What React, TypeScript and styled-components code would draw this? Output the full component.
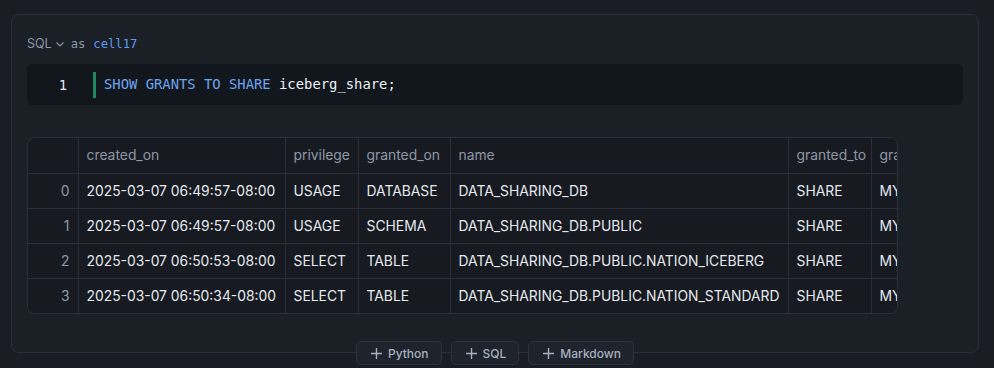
import React from "react";
import styled, { createGlobalStyle } from "styled-components";

const Global = createGlobalStyle`
  html, body { margin: 0; padding: 0; background: #1a1d23; }
  body { font-family: Inter, "Noto Sans", sans-serif; }
  * { box-sizing: border-box; }
`;

const Page = styled.div`
  width: 994px;
  height: 368px;
  padding: 14px 15px 0 11px;
  overflow: hidden;
`;

const Cell = styled.div`
  position: relative;
  height: 339px;
  border: 1px solid #2a2f3d;
  border-radius: 8px;
  background: #1b1f26;
  padding: 20px 15px 0 15px;
`;

const Header = styled.div`
  display: flex;
  align-items: center;
  gap: 6px;
  height: 17px;
  font-size: 12px;
`;

const Lang = styled.span`
  display: flex;
  align-items: center;
  gap: 3px;
  color: #8d96a6;
  font-family: Inter, sans-serif;
  font-size: 12.5px;
`;

const Mono = styled.span<{ $blue?: boolean }>`
  font-family: "DejaVu Sans Mono", "Liberation Mono", monospace;
  font-size: 12.2px;
  color: ${(p) => (p.$blue ? "#5b9bf0" : "#8d96a6")};
  margin-left: ${(p) => (p.$blue ? "2px" : "0")};
`;

const Editor = styled.div`
  margin-top: 12px;
  height: 41px;
  border-radius: 5px;
  background: #12171e;
  display: flex;
  align-items: center;
`;

const LineNo = styled.div`
  width: 66px;
  padding-right: 26px;
  text-align: right;
  font-family: "DejaVu Sans Mono", monospace;
  font-size: 13.85px;
  color: #e6e9ee;
`;

const Gutter = styled.div`
  width: 3px;
  height: 26px;
  background: #1f8a5e;
  margin-right: 8px;
`;

const Code = styled.div`
  font-family: "DejaVu Sans Mono", "Liberation Mono", monospace;
  font-size: 13.85px;
  color: #eef1f5;
  white-space: pre;
  margin-top: -1px;
`;

const Kw = styled.span`
  color: #6fa4ee;
`;

const TableWrap = styled.div`
  margin-top: 32px;
  width: 871px;
  border: 1px solid #2a2f3a;
  border-radius: 8px;
  overflow: hidden;
`;

const Table = styled.table`
  border-collapse: collapse;
  table-layout: fixed;
  width: 963px;
  font-size: 13.87px;
  white-space: nowrap;
  background: #171b21;
`;

const Th = styled.th<{ $w: number }>`
  width: ${(p) => p.$w}px;
  height: 35px;
  padding: 0 8px;
  text-align: left;
  font-weight: 400;
  color: #8e97a5;
  overflow: hidden;
  border-right: 1px solid #2a2f3a;
  border-bottom: 1px solid #2a2f3a;
`;

const Td = styled.td<{ $index?: boolean }>`
  height: 35px;
  padding: 0 8px;
  overflow: hidden;
  color: ${(p) => (p.$index ? "#8e97a5" : "#e4e8ee")};
  text-align: ${(p) => (p.$index ? "right" : "left")};
  border-right: 1px solid #2a2f3a;
  border-bottom: 1px solid #2a2f3a;
  tr:last-child > & { border-bottom: none; }
`;

const AddBar = styled.div`
  position: absolute;
  left: 0;
  right: 0;
  bottom: -13px;
  display: flex;
  justify-content: center;
  gap: 9px;
`;

const AddButton = styled.button`
  display: flex;
  align-items: center;
  gap: 5px;
  height: 24px;
  padding: 0 12px 0 13px;
  border: 1px solid #2c3240;
  border-radius: 5px;
  background: #1e232c;
  color: #a7b0bf;
  font-family: Inter, sans-serif;
  font-size: 12px;
  font-weight: 500;
`;

const Plus = () => (
  <svg width="13" height="13" viewBox="0 0 13 13" fill="none" stroke="#a7b0bf" strokeWidth="1.4">
    <path d="M6.5 1v11M1 6.5h11" />
  </svg>
);

const Chevron = () => (
  <svg width="10" height="10" viewBox="0 0 10 10" fill="none" stroke="#8d96a6" strokeWidth="1.1">
    <path d="M1.5 3.5l3.5 3.5 3.5-3.5" />
  </svg>
);

const columns: [string, number][] = [
  ["", 50],
  ["created_on", 207],
  ["privilege", 73],
  ["granted_on", 92],
  ["name", 338],
  ["granted_to", 83],
  ["grantee_name", 120],
];

const rows = [
  ["2025-03-07 06:49:57-08:00", "USAGE", "DATABASE", "DATA_SHARING_DB", "SHARE", "MYORG"],
  ["2025-03-07 06:49:57-08:00", "USAGE", "SCHEMA", "DATA_SHARING_DB.PUBLIC", "SHARE", "MYORG"],
  ["2025-03-07 06:50:53-08:00", "SELECT", "TABLE", "DATA_SHARING_DB.PUBLIC.NATION_ICEBERG", "SHARE", "MYORG"],
  ["2025-03-07 06:50:34-08:00", "SELECT", "TABLE", "DATA_SHARING_DB.PUBLIC.NATION_STANDARD", "SHARE", "MYORG"],
];

export default function App() {
  return (
    <>
      <Global />
      <Page>
        <Cell>
          <Header>
            <Lang>
              SQL
              <Chevron />
            </Lang>
            <Mono>as</Mono>
            <Mono $blue>cell17</Mono>
          </Header>
          <Editor>
            <LineNo>1</LineNo>
            <Gutter />
            <Code>
              <Kw>SHOW GRANTS TO SHARE</Kw> iceberg_share;
            </Code>
          </Editor>
          <TableWrap>
            <Table>
              <thead>
                <tr>
                  {columns.map(([name, w]) => (
                    <Th key={name || "idx"} $w={w}>
                      {name}
                    </Th>
                  ))}
                </tr>
              </thead>
              <tbody>
                {rows.map((r, i) => (
                  <tr key={i}>
                    <Td $index>{i}</Td>
                    {r.map((c, j) => (
                      <Td key={j}>{c}</Td>
                    ))}
                  </tr>
                ))}
              </tbody>
            </Table>
          </TableWrap>
          <AddBar>
            <AddButton>
              <Plus />
              Python
            </AddButton>
            <AddButton>
              <Plus />
              SQL
            </AddButton>
            <AddButton>
              <Plus />
              Markdown
            </AddButton>
          </AddBar>
        </Cell>
      </Page>
    </>
  );
}
